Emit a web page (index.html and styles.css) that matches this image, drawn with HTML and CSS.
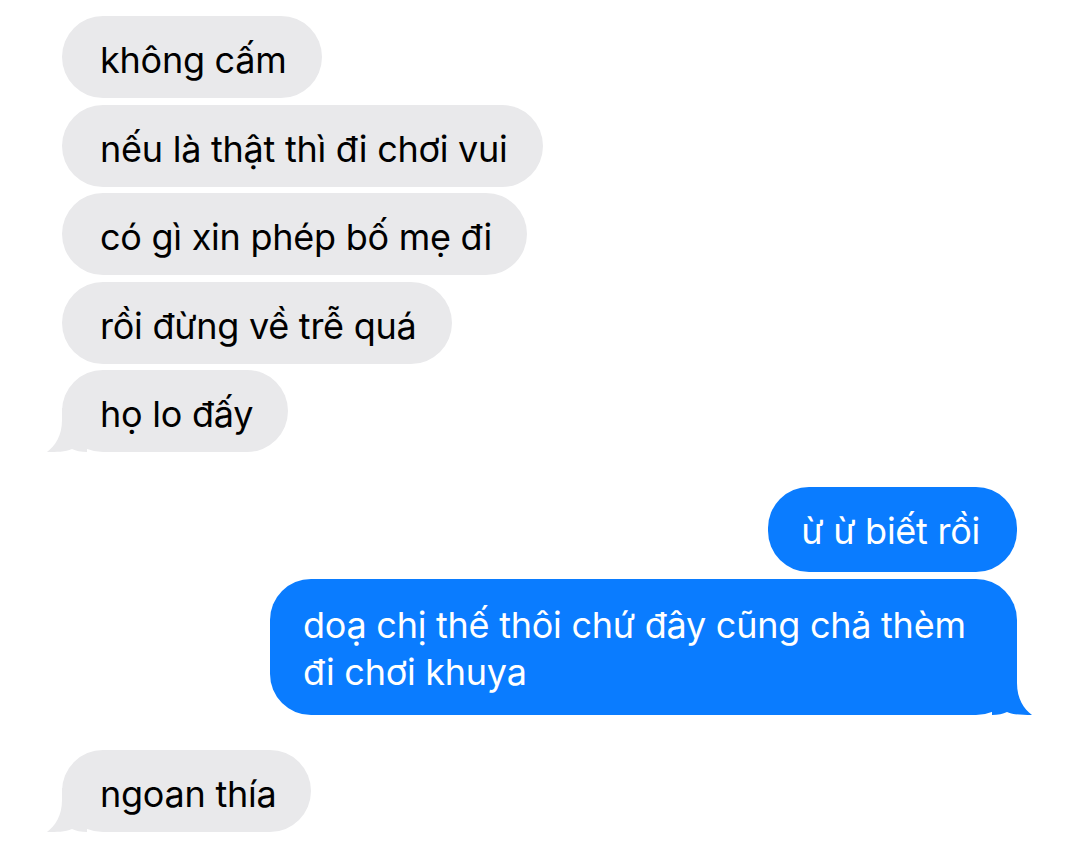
FILE: index.html
```html
<!DOCTYPE html>
<html lang="vi">

<head>
    <meta charset="UTF-8">
    <meta name="viewport" content="width=device-width, initial-scale=1.0">
    <title>Tin nhắn</title>
    <link rel="stylesheet" href="styles.css">
</head>

<body>
    <div class="chat">
        <div class="group received">
            <div class="bubble">không cấm</div>
            <div class="bubble">nếu là thật thì đi chơi vui</div>
            <div class="bubble">có gì xin phép bố mẹ đi</div>
            <div class="bubble">rồi đừng về trễ quá</div>
            <div class="bubble last">họ lo đấy
                <svg class="tail" viewBox="0 0 40 44" width="40" height="44">
                    <path d="M15 0 L40 0 L40 44 C34 44 29 43 25 41 C18 44 10 44 0 44 C8 38 15 28 15 12 Z" />
                </svg>
            </div>
        </div>

        <div class="group sent">
            <div class="bubble">ừ ừ biết rồi</div>
            <div class="bubble last multi">doạ chị thế thôi chứ đây cũng chả thèm đi chơi khuya
                <svg class="tail" viewBox="0 0 40 44" width="40" height="44">
                    <path d="M15 0 L40 0 L40 44 C34 44 29 43 25 41 C18 44 10 44 0 44 C8 38 15 28 15 12 Z" />
                </svg>
            </div>
        </div>

        <div class="group received">
            <div class="bubble last">ngoan thía
                <svg class="tail" viewBox="0 0 40 44" width="40" height="44">
                    <path d="M15 0 L40 0 L40 44 C34 44 29 43 25 41 C18 44 10 44 0 44 C8 38 15 28 15 12 Z" />
                </svg>
            </div>
        </div>
    </div>
</body>

</html>
```

FILE: styles.css
```css
* {
    margin: 0;
    padding: 0;
    box-sizing: border-box;
}

body {
    background-color: #ffffff;
    font-family: Inter, "Noto Sans", "Liberation Sans", sans-serif;
    width: 1080px;
    height: 861px;
    overflow: hidden;
}

.chat {
    display: flex;
    flex-direction: column;
    gap: 35px;
    padding: 16px 63px 0 62px;
}

.group {
    display: flex;
    flex-direction: column;
    gap: 6.5px;
}

.received {
    align-items: flex-start;
}

.sent {
    align-items: flex-end;
}

.bubble {
    position: relative;
    max-width: 747px;
    padding: 20px 35px 14px 38px;
    border-radius: 41px;
    font-size: 36px;
    line-height: 48px;
    letter-spacing: -0.25px;
}

.received .bubble {
    background-color: #e9e9eb;
    color: #000000;
}

.sent .bubble {
    background-color: #0a7cff;
    color: #ffffff;
    padding: 20px 37px 17px 33px;
}

.sent .bubble.multi {
    padding: 23px 40px 19px 33px;
    line-height: 47px;
}

.tail {
    position: absolute;
    bottom: 0;
    left: -15px;
}

.received .tail {
    fill: #e9e9eb;
}

.sent .tail {
    left: auto;
    right: -15px;
    transform: scaleX(-1);
    fill: #0a7cff;
}
```
